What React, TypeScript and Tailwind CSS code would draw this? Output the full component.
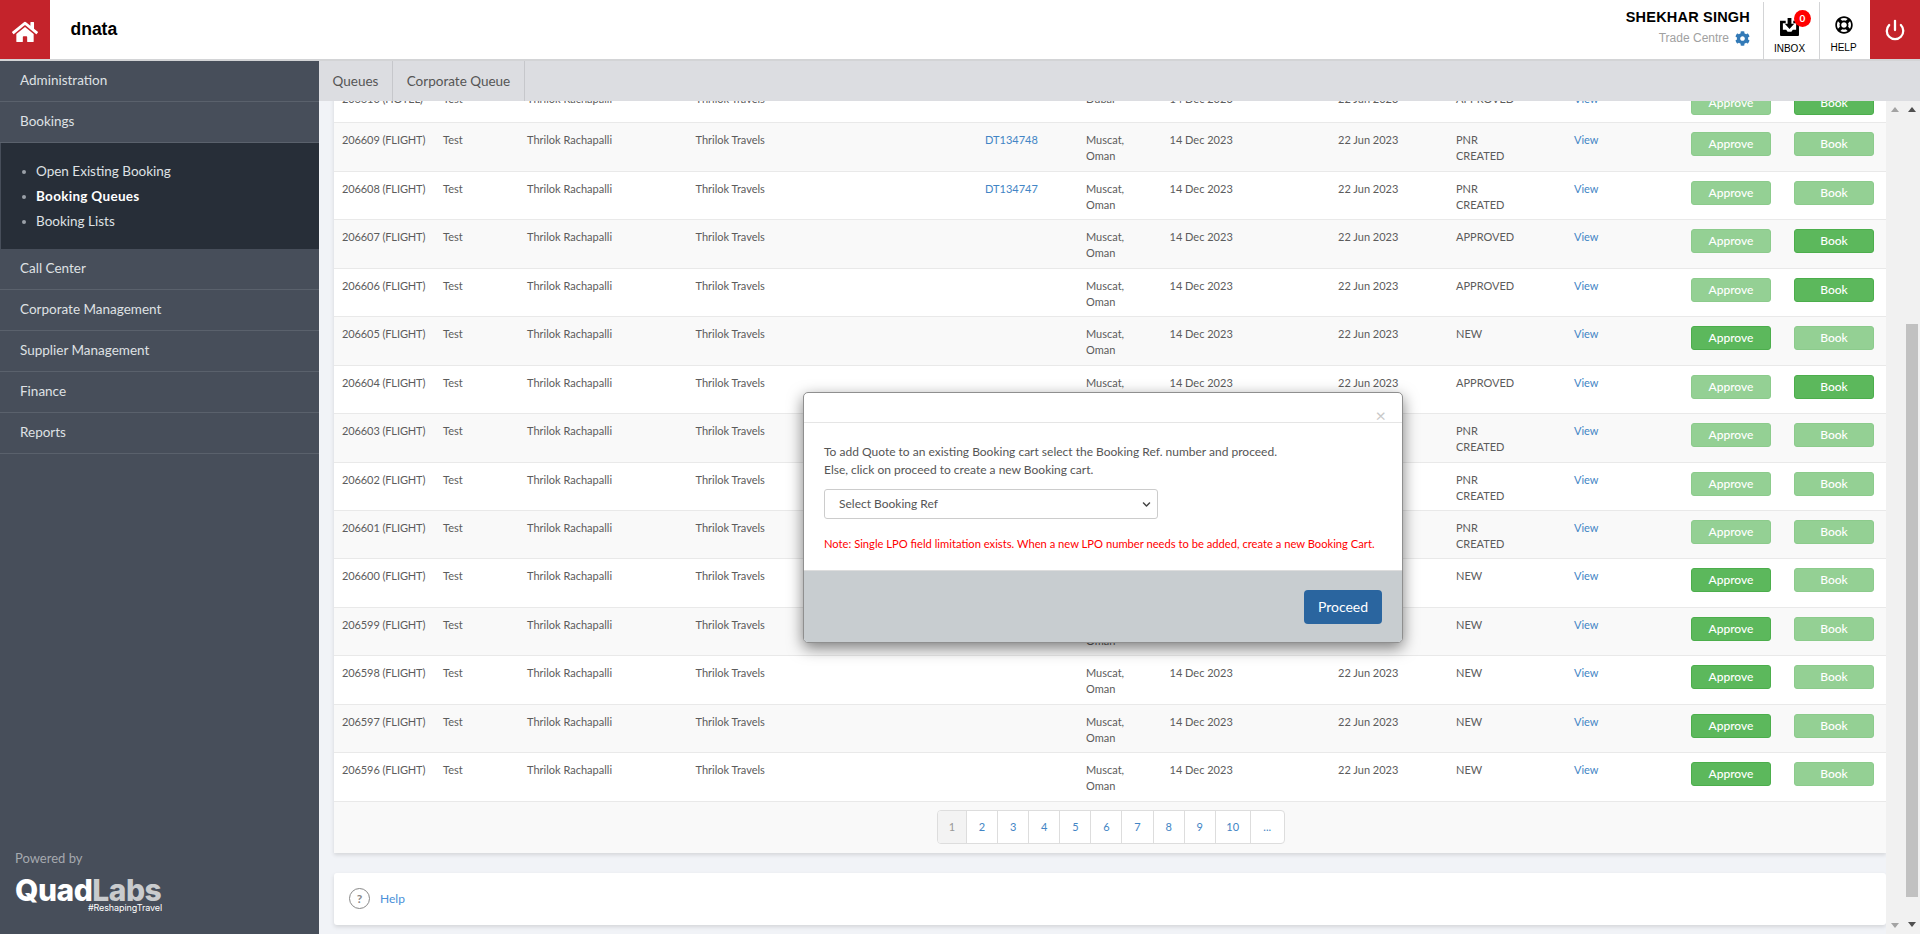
import React from "react";
import { FaHome, FaCog, FaRegLifeRing, FaChevronDown } from "react-icons/fa";
import { Power } from "lucide-react";

type Row = {
  id: string;
  ref?: string;
  city: string;
  country?: string;
  status: string[];
  approve: boolean;
  book: boolean;
};

const flight = (id: number, status: string[], approve: boolean, book: boolean, ref?: string): Row => ({
  id: `${id} (FLIGHT)`,
  ref,
  city: "Muscat,",
  country: "Oman",
  status,
  approve,
  book,
});

const PNR = ["PNR", "CREATED"];

const rows: Row[] = [
  { id: "206610 (HOTEL)", city: "Dubai", status: ["APPROVED"], approve: false, book: true },
  flight(206609, PNR, false, false, "DT134748"),
  flight(206608, PNR, false, false, "DT134747"),
  flight(206607, ["APPROVED"], false, true),
  flight(206606, ["APPROVED"], false, true),
  flight(206605, ["NEW"], true, false),
  flight(206604, ["APPROVED"], false, true),
  flight(206603, PNR, false, false),
  flight(206602, PNR, false, false),
  flight(206601, PNR, false, false),
  flight(206600, ["NEW"], true, false),
  flight(206599, ["NEW"], true, false),
  flight(206598, ["NEW"], true, false),
  flight(206597, ["NEW"], true, false),
  flight(206596, ["NEW"], true, false),
];

const menuTop = ["Administration", "Bookings"];
const menuBottom = ["Call Center", "Corporate Management", "Supplier Management", "Finance", "Reports"];
const pages = ["2", "3", "4", "5", "6", "7", "8", "9", "10", "..."];

const InboxIcon = () => (
  <svg width="19" height="18" viewBox="0 0 20 19" fill="black">
    <path d="M0 3h6v2.500H3v7h3.500l1.500 2h4l1.500-2H17v-7h-3V3h6v15a1 1 0 0 1-1 1H1a1 1 0 0 1-1-1z" />
    <path d="M8 0h4v6h3l-5 5.500L5 6h3z" />
  </svg>
);

const GreenButton = ({ label, active }: { label: string; active: boolean }) => (
  <button
    className={`w-20 h-6 rounded-[3px] text-[12px] font-medium text-white border ${
      active ? "bg-[#5cb85c] border-[#4cae4c]" : "bg-[#94d094] border-[#8ccb8c]"
    }`}
  >
    {label}
  </button>
);

const TableRow = ({ row, shaded }: { row: Row; shaded: boolean }) => (
  <div
    className={`flex border-b border-[#e9e9e9] pt-[9px] text-[11px] leading-[16px] text-[#5c5c5c] ${
      row.country ? "h-[48.460px]" : "h-[41px]"
    } ${shaded ? "bg-[#f9f9f9]" : "bg-white"}`}
  >
    <div className="w-[109px] pl-2 whitespace-nowrap tracking-[-0.1px]">{row.id}</div>
    <div className="w-[84px]">Test</div>
    <div className="w-[168.500px]">Thrilok Rachapalli</div>
    <div className="w-[289.500px]">Thrilok Travels</div>
    <div className="w-[101px] text-[#4285c5]">{row.ref}</div>
    <div className="w-[83.500px]">
      {row.city}
      <br />
      {row.country}
    </div>
    <div className="w-[168.500px]">14 Dec 2023</div>
    <div className="w-[118px]">22 Jun 2023</div>
    <div className="w-[118px]">
      {row.status.map((s) => (
        <div key={s}>{s}</div>
      ))}
    </div>
    <div className="w-[117px] text-[#4285c5]">View</div>
    <div className="flex gap-[23px]">
      <GreenButton label="Approve" active={row.approve} />
      <GreenButton label="Book" active={row.book} />
    </div>
  </div>
);

const Scrollbar = () => (
  <div className="flex w-[17px] flex-col items-center justify-between bg-[#f1f1f1] py-[6px]">
    <span className="text-[0px] border-x-[4px] border-b-[5px] border-x-transparent border-b-[#a3a3a3]" />
    <span className="text-[0px] border-x-[4px] border-t-[5px] border-x-transparent border-t-[#a3a3a3]" />
  </div>
);

const OuterScrollbar = () => (
  <div className="relative flex w-[17px] flex-col items-center bg-[#f1f1f1] pt-[6px]">
    <span className="border-x-[4px] border-b-[5px] border-x-transparent border-b-[#505050]" />
    <div className="mt-[212px] h-[573px] w-[12px] bg-[#c1c1c1]" />
    <span className="mt-[25px] border-x-[4px] border-t-[5px] border-x-transparent border-t-[#505050]" />
  </div>
);

export default function App() {
  return (
    <div className="relative h-[934px] w-[1920px] overflow-hidden bg-[#f1f3f7] font-['Lato','Liberation_Sans',sans-serif]">
      <header className="flex h-[61px] items-stretch border-b-2 border-[#d3d4d6] bg-white">
        <div className="flex w-[50px] items-center justify-center bg-[#c4232b] pt-[5px] text-white">
          <FaHome size={26} />
        </div>
        <div className="ml-[20.500px] flex items-center font-['Liberation_Sans',sans-serif] text-[17.500px] font-bold text-black">
          dnata
        </div>
        <div className="ml-auto flex items-stretch">
          <div className="mr-[13px] mt-[9px] flex flex-col items-end font-['Liberation_Sans',sans-serif]">
            <div className="text-[14.500px] font-bold leading-[17px] tracking-[0.2px] text-black">SHEKHAR SINGH</div>
            <div className="mt-[3px] flex items-center gap-[6px] text-[12px] text-[#a1a1a1]">
              Trade Centre <FaCog size={15} className="text-[#337ab7]" />
            </div>
          </div>
          <div className="mt-[2px] flex w-[56px] flex-col items-center border-l border-[#d3d4d6] pr-[4px] pt-[16px]">
            <div className="relative">
              <InboxIcon />
              <span className="absolute -right-[12px] -top-[8px] flex h-[17px] w-[17px] items-center justify-center rounded-full bg-[#ff0000] text-[10px] font-bold text-white">
                0
              </span>
            </div>
            <span className="mt-[5px] font-['Liberation_Sans',sans-serif] text-[10px] text-black">INBOX</span>
          </div>
          <div className="mt-[2px] flex w-[51px] flex-col items-center border-l border-[#d3d4d6] pr-[3px] pt-[14px]">
            <FaRegLifeRing size={18} className="text-black" />
            <span className="mt-[6px] font-['Liberation_Sans',sans-serif] text-[10px] text-black">HELP</span>
          </div>
          <div className="flex w-[50px] items-center justify-center bg-[#c4232b] text-white">
            <Power size={22} strokeWidth={2.5} />
          </div>
        </div>
      </header>

      <div className="flex h-[873px]">
        <aside className="flex w-[319px] shrink-0 flex-col bg-[#474e5a] text-[13.500px] text-[#dfe1e4]">
          {menuTop.map((m) => (
            <div key={m} className="flex h-[41px] items-center border-b border-[#5a616c] pb-[1px] pl-5">
              {m}
            </div>
          ))}
          <ul className="flex h-[106px] flex-col justify-center gap-[6px] border-l border-[#474e5a] bg-[#272e38] pl-[35px] leading-[19px]">
            <li className="relative">
              <span className="absolute -left-[14px] top-[8px] h-1 w-1 rounded-full bg-[#9aa0a8]" />
              Open Existing Booking
            </li>
            <li className="relative font-bold tracking-[0.3px] text-white">
              <span className="absolute -left-[14px] top-[8px] h-1 w-1 rounded-full bg-[#9aa0a8]" />
              Booking Queues
            </li>
            <li className="relative">
              <span className="absolute -left-[14px] top-[8px] h-1 w-1 rounded-full bg-[#9aa0a8]" />
              Booking Lists
            </li>
          </ul>
          {menuBottom.map((m) => (
            <div key={m} className="flex h-[41px] items-center border-b border-[#5a616c] pb-[1px] pl-5">
              {m}
            </div>
          ))}
          <div className="mt-auto pb-[21px] pl-[15px]">
            <div className="text-[13px] text-[#a5a9af]">Powered by</div>
            <div className="mt-[9px] w-[148px] font-['Inter',sans-serif] text-[30px] font-extrabold leading-[26px] tracking-[-0.500px] text-white">
              Quad<span className="text-[#c9cbcd]">Labs</span>
            </div>
            <div className="w-[147px] text-right font-['Inter',sans-serif] text-[9px] leading-[10px] tracking-[-0.1px] text-white">
              #ReshapingTravel
            </div>
          </div>
        </aside>

        <main className="flex min-w-0 flex-1 flex-col">
          <nav className="z-10 flex h-[40px] shrink-0 bg-[#dcdde1] text-[13.500px] text-[#555]">
            <div className="flex w-[74px] items-center justify-center border-r border-[#c6c7cb]">Queues</div>
            <div className="flex w-[132px] items-center justify-center border-r border-[#c6c7cb]">Corporate Queue</div>
          </nav>
          <div className="flex min-h-0 flex-1">
            <div className="min-w-0 flex-1 overflow-hidden pl-[15px]">
              <div className="-mt-[18.600px] shadow-[0_2px_4px_rgba(0,0,0,0.12)]">
                {rows.map((row, i) => (
                  <TableRow key={row.id} row={row} shaded={i % 2 === 1} />
                ))}
                <div className="flex h-[51px] items-center bg-[#f9f9f9] pl-[603px]">
                  <div className="flex h-[34px] overflow-hidden rounded-[4px] border border-[#dddddd] bg-white text-[11px] text-[#4285c5]">
                    <span className="flex w-[29px] items-center justify-center border-r border-[#dddddd] bg-[#f3f3f3] text-[#999]">
                      1
                    </span>
                    {pages.map((p) => (
                      <span
                        key={p}
                        className={`flex items-center justify-center border-r border-[#dddddd] last:border-r-0 ${
                          p === "10" ? "w-[35px]" : p === "..." ? "w-[33px]" : "w-[31.100px]"
                        }`}
                      >
                        {p}
                      </span>
                    ))}
                  </div>
                </div>
              </div>
              <div className="mt-[20px] flex h-[52px] items-center rounded-[3px] bg-white pl-[15px] text-[12px] text-[#4a90d9] shadow-[0_2px_4px_rgba(0,0,0,0.12)]">
                <span className="mr-[10px] flex h-[21px] w-[21px] items-center justify-center rounded-full border border-[#888] text-[12px] font-bold text-[#888]">
                  ?
                </span>
                Help
              </div>
            </div>
            <Scrollbar />
            <OuterScrollbar />
          </div>
        </main>
      </div>

      <div className="absolute left-[803px] top-[392px] flex h-[251px] w-[600px] flex-col overflow-hidden rounded-[5px] border border-[#8f8f8f] bg-white shadow-[0_5px_15px_rgba(0,0,0,0.5)]">
        <div className="relative h-[30px] border-b border-[#e5e5e5]">
          <span className="absolute right-[16px] top-[12px] text-[18px] leading-[20px] text-[#c9c9c9]">×</span>
        </div>
        <div className="h-[147px] px-5 pt-[20px] text-[12px] leading-[18px] text-[#555]">
          <p>To add Quote to an existing Booking cart select the Booking Ref. number and proceed.</p>
          <p>Else, click on proceed to create a new Booking cart.</p>
          <div className="mt-[10px] flex h-[30px] w-[334px] items-center justify-between rounded-[3px] border border-[#cccccc] pl-[14px] pr-[6px]">
            Select Booking Ref
            <FaChevronDown size={9} className="text-[#444]" />
          </div>
          <p className="mt-[16px] whitespace-nowrap text-[11.200px] text-[#ff0000]">
            Note: Single LPO field limitation exists. When a new LPO number needs to be added, create a new Booking Cart.
          </p>
        </div>
        <div className="flex flex-1 items-center justify-end border-t border-[#dddddd] bg-[#c8cdd0] pr-5">
          <button className="h-[34px] w-[78px] rounded-[4px] bg-[#2a659f] text-[14px] text-white">Proceed</button>
        </div>
      </div>
    </div>
  );
}
